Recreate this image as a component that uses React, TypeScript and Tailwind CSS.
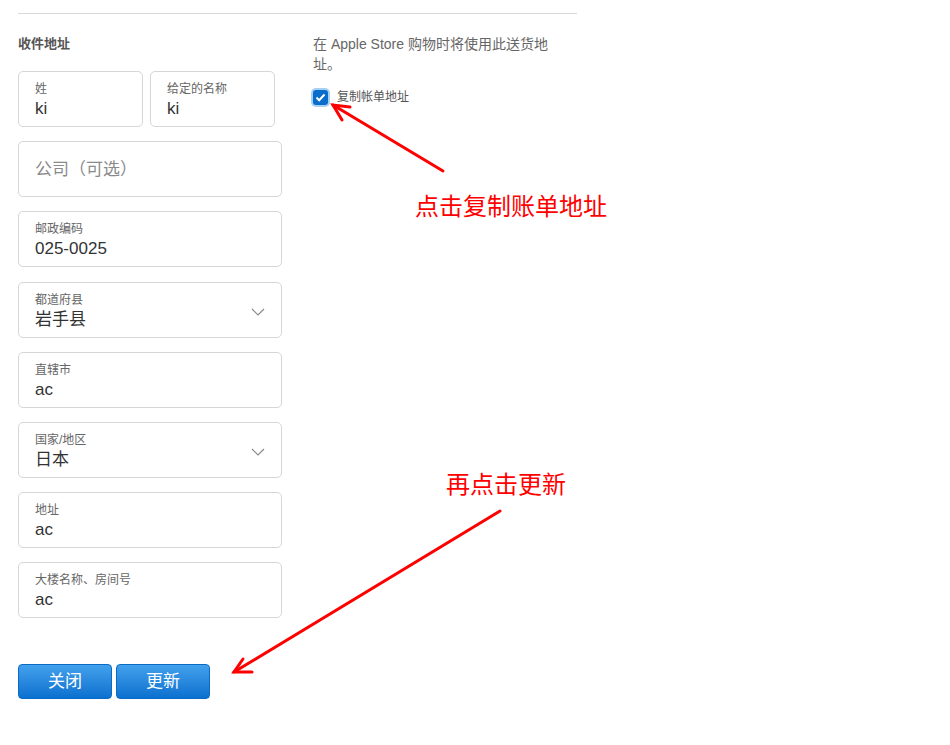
import React from 'react';

const font = { fontFamily: '"Liberation Sans", "Noto Sans CJK SC", sans-serif' };

function Chevron() {
  return (
    <svg width="14" height="8" viewBox="0 0 14 8" className="shrink-0">
      <polyline points="1,1 7,7 13,1" fill="none" stroke="#8a8a8a" strokeWidth="1.2" />
    </svg>
  );
}

function Field({
  label,
  value,
  select,
  className = 'w-[264px]',
}: {
  label: string;
  value: string;
  select?: boolean;
  className?: string;
}) {
  return (
    <div
      className={`flex h-[56px] items-start justify-between rounded-[5px] border border-[#d6d6d6] bg-white pl-[16px] pr-[16px] pt-[10px] ${className}`}
    >
      <div className="flex flex-col">
        <span className="text-[12px] leading-[14px] text-[#666]">{label}</span>
        <span className="pt-[1px] text-[17px] leading-[23px] text-[#333]">{value}</span>
      </div>
      {select && (
        <div className="mt-[15px]">
          <Chevron />
        </div>
      )}
    </div>
  );
}

export default function App() {
  return (
    <div className="relative h-[745px] w-[950px] overflow-hidden bg-white" style={font}>
      {/* Top divider */}
      <div className="ml-[18px] mt-[13px] w-[559px] border-t border-[#d9d9d9]" />

      <div className="flex gap-[31px] pl-[18px] pt-[20px]">
        {/* Left column: form */}
        <div className="flex w-[264px] flex-col">
          <h3 className="text-[13px] font-bold leading-[20px] text-[#555]">收件地址</h3>

          <div className="mt-[17px] flex flex-col gap-[14px]">
            <div className="flex gap-[7px]">
              <Field label="姓" value="ki" className="w-[125px]" />
              <Field label="给定的名称" value="ki" className="w-[125px]" />
            </div>

            <div className="flex h-[56px] items-center rounded-[5px] border border-[#d6d6d6] px-[16px]">
              <span className="pt-[1px] text-[17px] text-[#8a8a8a]">公司（可选）</span>
            </div>

            <Field label="邮政编码" value="025-0025" />
            <div className="flex flex-col gap-[14px] pt-[1px]">
              <Field label="都道府县" value="岩手县" select />
              <Field label="直辖市" value="ac" />
              <Field label="国家/地区" value="日本" select />
              <Field label="地址" value="ac" />
              <Field label="大楼名称、房间号" value="ac" />
            </div>
          </div>

          <div className="mt-[46px] flex gap-[4px]">
            <button className="h-[35px] w-[94px] rounded-[4px] border border-[#0b6ac4] bg-gradient-to-b from-[#42a1ec] to-[#0870cf] text-[17px] text-white">
              关闭
            </button>
            <button className="h-[35px] w-[94px] rounded-[4px] border border-[#0b6ac4] bg-gradient-to-b from-[#42a1ec] to-[#0870cf] text-[17px] text-white">
              更新
            </button>
          </div>
        </div>

        {/* Right column */}
        <div className="flex w-[250px] flex-col">
          <p className="text-[14px] leading-[20px] text-[#666]">
            在 Apple Store 购物时将使用此送货地址。
          </p>
          <label className="mt-[15px] flex items-center gap-[9px]">
            <span className="flex h-[15px] w-[15px] items-center justify-center rounded-[3px] bg-[#0a6dcc] ring-2 ring-[#a8d0f5]">
              <svg width="11" height="9" viewBox="0 0 11 9">
                <polyline points="1.5,4.5 4.2,7.2 9.5,1.5" fill="none" stroke="white" strokeWidth="2" />
              </svg>
            </span>
            <span className="text-[12px] leading-[16px] text-[#555]">复制帐单地址</span>
          </label>
        </div>
      </div>

      {/* Annotation arrows */}
      <svg className="pointer-events-none absolute left-0 top-0" width="950" height="745">
        <g stroke="#ff0000" strokeWidth="3" strokeLinecap="round" fill="none">
          <line x1="443" y1="171" x2="333" y2="105" />
          <polyline points="350,107 333,105 342,120" />
          <line x1="500" y1="511" x2="234" y2="672" />
          <polyline points="243,659 234,672 252,672" />
        </g>
      </svg>

      <span
        className="absolute left-[415px] top-[190px] text-[24px] leading-[30px] text-[#ff0000]"
        style={{ fontFamily: '"Noto Sans CJK SC", sans-serif' }}
      >
        点击复制账单地址
      </span>
      <span
        className="absolute left-[446px] top-[468px] text-[24px] leading-[30px] text-[#ff0000]"
        style={{ fontFamily: '"Noto Sans CJK SC", sans-serif' }}
      >
        再点击更新
      </span>
    </div>
  );
}
